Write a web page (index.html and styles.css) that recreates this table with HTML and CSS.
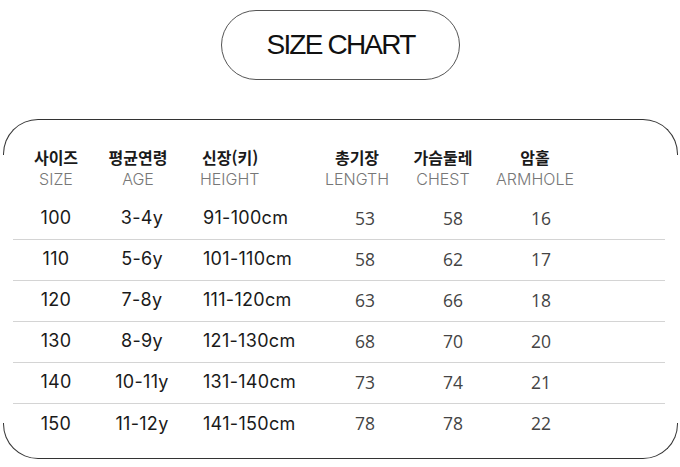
FILE: index.html
```html
<!DOCTYPE html>
<html lang="ko">
<head>
<meta charset="utf-8">
<title>Size Chart</title>
<link rel="stylesheet" href="styles.css">
</head>
<body>
<div class="title-wrap">
  <div class="pill">SIZE CHART</div>
</div>
<div class="frame">
  <div class="table">
    <div class="row head">
      <div class="c c1"><span class="ko">사이즈</span><span class="en">SIZE</span></div>
      <div class="c c2"><span class="ko">평균연령</span><span class="en">AGE</span></div>
      <div class="c c3"><span class="ko">신장(키)</span><span class="en">HEIGHT</span></div>
      <div class="c c4"><span class="ko">총기장</span><span class="en">LENGTH</span></div>
      <div class="c c5"><span class="ko">가슴둘레</span><span class="en">CHEST</span></div>
      <div class="c c6"><span class="ko">암홀</span><span class="en">ARMHOLE</span></div>
    </div>
    <div class="row body">
      <div class="c c1 v">100</div><div class="c c2 v">3-4y</div><div class="c c3 v">91-100cm</div>
      <div class="c c4 n">53</div><div class="c c5 n">58</div><div class="c c6 n">16</div>
    </div>
    <div class="row body">
      <div class="c c1 v">110</div><div class="c c2 v">5-6y</div><div class="c c3 v">101-110cm</div>
      <div class="c c4 n">58</div><div class="c c5 n">62</div><div class="c c6 n">17</div>
    </div>
    <div class="row body">
      <div class="c c1 v">120</div><div class="c c2 v">7-8y</div><div class="c c3 v">111-120cm</div>
      <div class="c c4 n">63</div><div class="c c5 n">66</div><div class="c c6 n">18</div>
    </div>
    <div class="row body">
      <div class="c c1 v">130</div><div class="c c2 v">8-9y</div><div class="c c3 v">121-130cm</div>
      <div class="c c4 n">68</div><div class="c c5 n">70</div><div class="c c6 n">20</div>
    </div>
    <div class="row body">
      <div class="c c1 v">140</div><div class="c c2 v">10-11y</div><div class="c c3 v">131-140cm</div>
      <div class="c c4 n">73</div><div class="c c5 n">74</div><div class="c c6 n">21</div>
    </div>
    <div class="row body last">
      <div class="c c1 v">150</div><div class="c c2 v">11-12y</div><div class="c c3 v">141-150cm</div>
      <div class="c c4 n">78</div><div class="c c5 n">78</div><div class="c c6 n">22</div>
    </div>
  </div>
</div>
</body>
</html>
```
FILE: styles.css
```css
* { box-sizing: border-box; }
html, body { margin: 0; padding: 0; background: #fff; }
body { width: 680px; height: 467px; overflow: hidden; font-family: "Noto Sans", sans-serif; }

.title-wrap { padding-top: 10px; display: flex; justify-content: center; }
.pill {
  width: 239px; height: 70px;
  border: 1px solid #555;
  border-radius: 35px;
  display: flex; align-items: center; justify-content: center;
  font-family: "Liberation Sans", Arial, sans-serif;
  font-size: 28px; letter-spacing: -1.8px; color: #111;
  padding-left: 1px;
}

.frame {
  position: relative;
  margin: 39px 2px 0 3px;
  padding: 26px 0 14px 10px;
}
.frame::before, .frame::after {
  content: ""; position: absolute; left: 0; right: 0; height: 35px;
  border: 1.5px solid #333;
}
.frame::before { top: 0; border-bottom: none; border-radius: 35px 35px 0 0; }
.frame::after { bottom: 0; border-top: none; border-radius: 0 0 35px 35px; }

.table { width: 652px; }
.row {
  display: grid;
  grid-template-columns: 86px 84px 130px 94px 76px 108px 74px;
}
.head { height: 54px; padding-top: 1px; }
.head .c { display: flex; flex-direction: column; align-items: center; }
.head .c2 { padding-right: 6px; }
.head .c3 { align-items: flex-start; padding-left: 19px; }
.head .c4 { padding-right: 6px; }
.head .c5 { padding-right: 4px; }
.head .c6 { padding-right: 4px; }
.ko {
  font-family: "Noto Sans CJK KR", sans-serif; font-weight: 700;
  font-size: 16px; line-height: 22px; color: #1a1a1a;
}
.en {
  font-family: Inter, "Noto Sans", sans-serif; font-weight: 300;
  font-size: 16px; line-height: 22px; color: #777;
}
.head .c3 .en { margin-left: -2px; }

.body { height: 41px; padding-bottom: 3px; border-bottom: 1px solid #d4d4d4; align-items: center; }
.body.last { border-bottom: none; }
.c { text-align: center; }
.v {
  font-family: Inter, sans-serif; font-size: 18px; color: #1a1a1a;
  letter-spacing: 0.3px;
}
.body .c3 { text-align: left; padding-left: 20px; }
.body .c2 { padding-left: 2px; }
.n { font-family: "Open Sans", sans-serif; font-size: 17.5px; color: #444; }
.body .c4 { padding-left: 10px; }
.body .c5 { padding-left: 16px; }
.body .c6 { padding-left: 8px; }
```
